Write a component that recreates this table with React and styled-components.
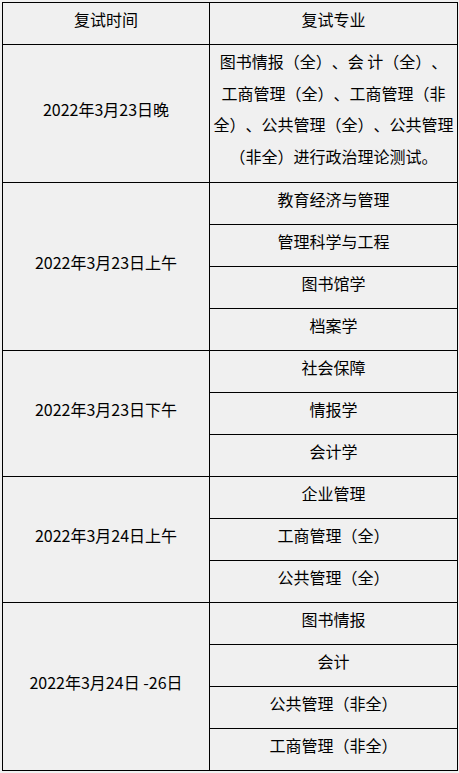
import React from "react";
import styled, { createGlobalStyle } from "styled-components";

const GlobalStyle = createGlobalStyle`
  html, body {
    margin: 0;
    padding: 0;
    background: #f0f0f0;
  }
  body {
    font-family: "Noto Sans CJK SC", "Noto Sans", sans-serif;
    color: #000;
    text-spacing-trim: space-all;
  }
`;

const groups = [
  {
    time: "2022年3月23日晚",
    lines: [
      "图书情报（全）、会 计（全）、",
      "工商管理（全）、工商管理（非",
      "全）、公共管理（全）、公共管理",
      "（非全）进行政治理论测试。",
    ],
  },
  {
    time: "2022年3月23日上午",
    majors: ["教育经济与管理", "管理科学与工程", "图书馆学", "档案学"],
  },
  {
    time: "2022年3月23日下午",
    majors: ["社会保障", "情报学", "会计学"],
  },
  {
    time: "2022年3月24日上午",
    majors: ["企业管理", "工商管理（全）", "公共管理（全）"],
  },
  {
    time: "2022年3月24日 -26日",
    majors: ["图书情报", "会计", "公共管理（非全）", "工商管理（非全）"],
  },
];

const App = () => {
  return (
    <Page>
      <GlobalStyle />
      <Table>
        <HeadCell>复试时间</HeadCell>
        <HeadCell>复试专业</HeadCell>
        {groups.map((g) =>
          g.lines ? (
            <React.Fragment key={g.time}>
              <TimeCell $span={1}>{g.time}</TimeCell>
              <NoteCell>
                {g.lines.map((l) => (
                  <NoteLine key={l}>{l}</NoteLine>
                ))}
              </NoteCell>
            </React.Fragment>
          ) : (
            <React.Fragment key={g.time}>
              <TimeCell $span={g.majors.length}>{g.time}</TimeCell>
              {g.majors.map((m) => (
                <MajorCell key={m}>{m}</MajorCell>
              ))}
            </React.Fragment>
          )
        )}
      </Table>
    </Page>
  );
};

export default App;

const Page = styled.div`
  padding: 2px 0 0 2px;
  width: 459px;
  height: 773px;
  box-sizing: border-box;
  background: #f0f0f0;
`;

const Table = styled.div`
  display: grid;
  grid-template-columns: 206px 247px;
  grid-template-rows: 41px 137px repeat(14, 41px);
  gap: 1px;
  padding: 1px;
  width: max-content;
  background: #000;
`;

const Cell = styled.div`
  background: #f0f0f0;
  display: flex;
  align-items: center;
  justify-content: center;
  font-size: 16px;
  white-space: nowrap;
  padding-bottom: 9px;
  box-sizing: border-box;
  text-spacing-trim: space-all;
`;

const HeadCell = styled(Cell)`
  grid-column: auto;
`;

const TimeCell = styled(Cell)`
  grid-column: 1;
  grid-row: span ${(p) => p.$span};
`;

const MajorCell = styled(Cell)`
  grid-column: 2;
`;

const NoteCell = styled(Cell)`
  grid-column: 2;
  flex-direction: column;
  padding: 0 0 9px;
`;

const NoteLine = styled.div`
  line-height: 31.5px;
  text-align: center;
`;
